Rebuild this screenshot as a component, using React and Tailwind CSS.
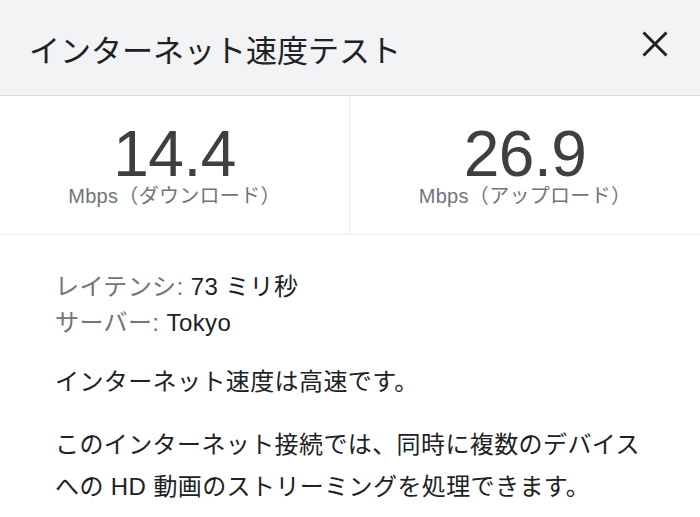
const font = { fontFamily: '"Liberation Sans", "Noto Sans CJK JP", sans-serif' };

function Stat({ value, label, divider }) {
  return (
    <div className={`flex flex-col items-center pt-[26px] ${divider ? 'border-r border-[#ececec]' : ''}`}>
      <div className="text-[64px] leading-[64px] text-[#3c4043] tracking-[-0.5px]">{value}</div>
      <div className="text-[20px] leading-[20px] tracking-[0.3px] text-[#70757a]">{label}</div>
    </div>
  );
}

export default function App() {
  return (
    <div className="w-[700px] h-[517px] bg-white overflow-hidden" style={font}>
      <div className="h-[96px] bg-[#f1f3f4] border-b border-[#dadce0] flex items-center justify-between pl-[29px] pr-[32px]">
        <h1 className="pt-2 text-[31px] leading-[40px] text-[#202124] font-normal">インターネット速度テスト</h1>
        <button className="mb-2 text-[#202124]" aria-label="閉じる">
          <svg width="26" height="26" viewBox="0 0 26 26" fill="none" stroke="currentColor" strokeWidth="3" strokeLinecap="butt">
            <path d="M1.5 1.5 L24.5 24.5 M24.5 1.5 L1.5 24.5" />
          </svg>
        </button>
      </div>

      <div className="grid grid-cols-2 h-[139px] border-b border-[#ececec]">
        <Stat value="14.4" label="Mbps（ダウンロード）" divider />
        <Stat value="26.9" label="Mbps（アップロード）" />
      </div>

      <div className="pl-[55px] pr-[55px] pt-[34px] text-[24px] tracking-[0.4px] text-[#202124]">
        <div className="leading-[36px]">
          <span className="text-[#70757a]">レイテンシ: </span>73 ミリ秒
        </div>
        <div className="leading-[36px]">
          <span className="text-[#70757a]">サーバー: </span>Tokyo
        </div>
        <p className="mt-[23px] leading-[36px]">インターネット速度は高速です。</p>
        <p className="mt-[24px] leading-[42px]">このインターネット接続では、同時に複数のデバイスへの HD 動画のストリーミングを処理できます。</p>
      </div>
    </div>
  );
}
